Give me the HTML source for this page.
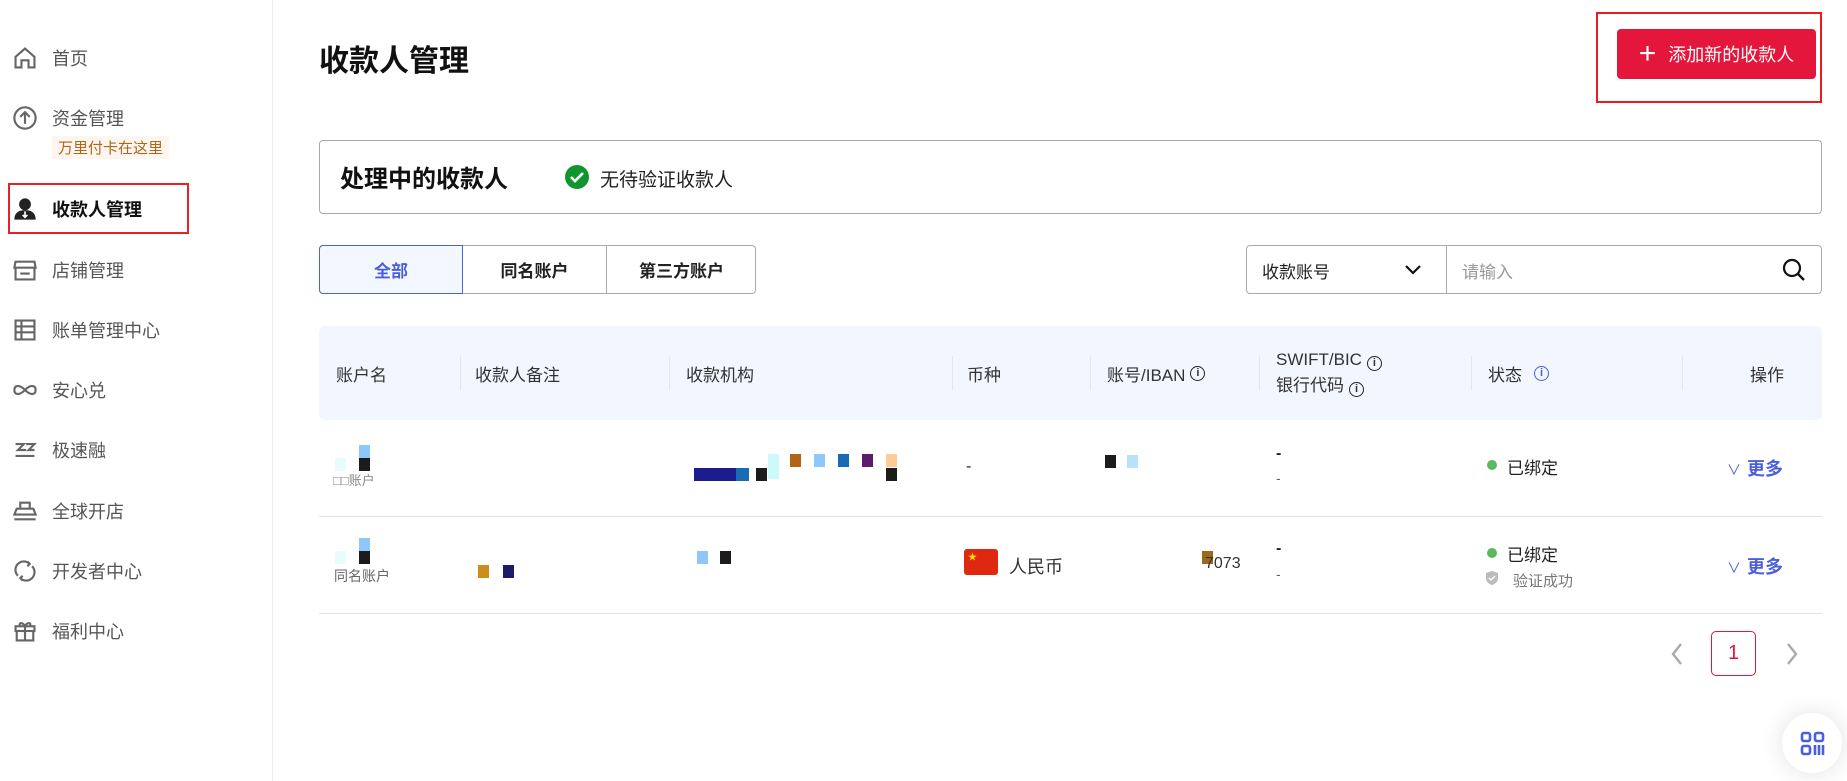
<!DOCTYPE html>
<html><head><meta charset="utf-8"><style>
*{margin:0;padding:0;box-sizing:border-box}
body{width:1847px;height:781px;overflow:hidden;background:#fff;font-family:"Liberation Sans","Noto Sans CJK SC",sans-serif;color:#222;position:relative}
.a{position:absolute}
.side{left:0;top:0;width:273px;height:781px;border-right:1px solid #eee}
.nav{position:absolute;left:52px;font-size:18px;color:#555;transform:translateY(-50%);white-space:nowrap}
.ic{position:absolute;left:12px;width:26px;height:26px;transform:translateY(-50%)}
.th{position:absolute;top:0;height:94px;display:flex;align-items:center;font-size:17px;color:#333}
.sep{position:absolute;top:30px;width:1px;height:34px;background:#e2e6ee}
.info{display:inline-block;width:15px;height:15px;border:1.6px solid #222;border-radius:50%;font-size:11px;line-height:12px;text-align:center;font-weight:bold;margin-left:5px;vertical-align:-1px}
.px{position:absolute;width:11px;height:13px}
.more{position:absolute;left:1727px;color:#4a5fd9;font-size:18px;font-weight:bold}
</style></head><body>
<div class="a side"></div>
<svg class="ic" style="top:58px" viewBox="0 0 22 22" fill="none" stroke="#666" stroke-width="1.8"><path d="M3 10 L11 3 L19 10 V19 H14 V13 H8 V19 H3 Z"/></svg>
<div class="nav" style="top:58px">首页</div>
<svg class="ic" style="top:118px" viewBox="0 0 22 22" fill="none" stroke="#666" stroke-width="1.8"><circle cx="11" cy="11" r="9"/><path d="M11 16V6M7 10l4-4 4 4"/></svg>
<div class="nav" style="top:118px">资金管理</div>
<div class="a" style="left:52px;top:136px;background:#fdf6ee;color:#b0651c;font-size:15px;padding:1px 6px">万里付卡在这里</div>
<div class="a" style="left:8px;top:183px;width:181px;height:51px;border:2px solid #e52226"></div>
<svg class="ic" style="top:209px" viewBox="0 0 22 22"><circle cx="11" cy="7" r="5" fill="#222"/><path d="M2 20c0-6 4-8 9-8s9 2 9 8z" fill="#222"/><path d="M11 13v5M9 16l2 2 2-2" stroke="#fff" stroke-width="1.4" fill="none"/></svg>
<div class="nav" style="top:209px;color:#111;font-weight:bold">收款人管理</div>
<svg class="ic" style="top:270px" viewBox="0 0 22 22" fill="none" stroke="#666" stroke-width="1.8"><path d="M3 4h16l1 5H2zM3 9v10h16V9M7 14h8"/></svg>
<div class="nav" style="top:270px">店铺管理</div>
<svg class="ic" style="top:330px" viewBox="0 0 22 22" fill="none" stroke="#666" stroke-width="1.8"><rect x="3" y="3" width="16" height="16"/><path d="M3 8h16M3 13h16M8 3v16"/></svg>
<div class="nav" style="top:330px">账单管理中心</div>
<svg class="ic" style="top:390px" viewBox="0 0 22 22" fill="none" stroke="#666" stroke-width="1.8"><path d="M2 11c0-4 4-5 9 0s9 4 9 0-4-5-9 0-9 4-9 0z"/></svg>
<div class="nav" style="top:390px">安心兑</div>
<svg class="ic" style="top:450px" viewBox="0 0 22 22" fill="none" stroke="#666" stroke-width="1.8"><path d="M3 6h7l-5 5h7M12 6h7l-5 5h5M3 16h16"/></svg>
<div class="nav" style="top:450px">极速融</div>
<svg class="ic" style="top:511px" viewBox="0 0 22 22" fill="none" stroke="#666" stroke-width="1.8"><path d="M7 4h8v5H7zM4 9h14l2 5H2zM2 18h18"/></svg>
<div class="nav" style="top:511px">全球开店</div>
<svg class="ic" style="top:571px" viewBox="0 0 22 22" fill="none" stroke="#666" stroke-width="1.8"><path d="M5 15a7 7 0 0 1 10-10M17 7a7 7 0 0 1-10 10M13 3l2 2-2 2M9 19l-2-2 2-2"/></svg>
<div class="nav" style="top:571px">开发者中心</div>
<svg class="ic" style="top:631px" viewBox="0 0 22 22" fill="none" stroke="#666" stroke-width="1.8"><rect x="3" y="7" width="16" height="4"/><path d="M4 11v8h14v-8M11 7v12M11 7c-2-4-6-3-4 0M11 7c2-4 6-3 4 0"/></svg>
<div class="nav" style="top:631px">福利中心</div>

<div class="a" style="left:319px;top:36px;font-size:30px;font-weight:bold;color:#111">收款人管理</div>
<div class="a" style="left:1596px;top:12px;width:226px;height:91px;border:2px solid #f01818"></div>
<div class="a" style="left:1617px;top:29px;width:199px;height:50px;background:#e5163c;border-radius:4px;color:#fff;font-size:18px;display:flex;align-items:center;justify-content:center"><span style="font-size:30px;font-weight:300;margin-right:12px;line-height:1">+</span>添加新的收款人</div>

<div class="a" style="left:319px;top:140px;width:1503px;height:74px;border:1px solid #aaa;border-radius:4px"></div>
<div class="a" style="left:340px;top:159px;font-size:24px;font-weight:bold;color:#111">处理中的收款人</div>
<svg class="a" style="left:564px;top:164px" width="26" height="26" viewBox="0 0 26 26"><circle cx="13" cy="13" r="12" fill="#11952f"/><path d="M7 13l4 4 8-8" stroke="#fff" stroke-width="2.6" fill="none"/></svg>
<div class="a" style="left:600px;top:165px;font-size:19px;color:#222">无待验证收款人</div>

<div class="a" style="left:319px;top:245px;width:437px;height:49px;border:1px solid #aaa;border-radius:4px"></div>
<div class="a" style="left:319px;top:245px;width:144px;height:49px;border:1px solid #4a63e0;background:#f3f7ff;border-radius:4px 0 0 4px;color:#4a5fd9;font-weight:bold;font-size:17px;display:flex;align-items:center;justify-content:center">全部</div>
<div class="a" style="left:463px;top:245px;width:144px;height:49px;border-right:1px solid #aaa;font-weight:bold;font-size:17px;display:flex;align-items:center;justify-content:center">同名账户</div>
<div class="a" style="left:607px;top:245px;width:149px;height:49px;font-weight:bold;font-size:17px;display:flex;align-items:center;justify-content:center">第三方账户</div>

<div class="a" style="left:1246px;top:245px;width:576px;height:49px;border:1px solid #aaa;border-radius:4px"></div>
<div class="a" style="left:1446px;top:245px;width:1px;height:49px;background:#aaa"></div>
<div class="a" style="left:1262px;top:258px;font-size:17px">收款账号</div>
<svg class="a" style="left:1404px;top:262px" width="18" height="14" viewBox="0 0 18 14"><path d="M2 4l7 7 7-7" stroke="#111" stroke-width="2.2" fill="none"/></svg>
<div class="a" style="left:1462px;top:258px;font-size:17px;color:#999">请输入</div>
<svg class="a" style="left:1781px;top:257px" width="26" height="26" viewBox="0 0 26 26"><circle cx="11" cy="11" r="8" stroke="#111" stroke-width="2.2" fill="none"/><path d="M17 17l6 6" stroke="#111" stroke-width="2.4"/></svg>

<div class="a" style="left:319px;top:326px;width:1503px;height:94px;background:#f2f6fe;border-radius:6px">
<div class="th" style="left:17px">账户名</div>
<div class="sep" style="left:141px"></div>
<div class="th" style="left:156px">收款人备注</div>
<div class="sep" style="left:350px"></div>
<div class="th" style="left:367px">收款机构</div>
<div class="sep" style="left:633px"></div>
<div class="th" style="left:648px">币种</div>
<div class="sep" style="left:771px"></div>
<div class="th" style="left:788px">账号/IBAN<span class="info">i</span></div>
<div class="sep" style="left:940px"></div>
<div class="th" style="left:957px;flex-direction:column;align-items:flex-start;justify-content:center;line-height:26px"><div>SWIFT/BIC<span class="info">i</span></div><div>银行代码<span class="info">i</span></div></div>
<div class="sep" style="left:1152px"></div>
<div class="th" style="left:1169px">状态<span class="info" style="border-color:#4a5fd9;color:#4a5fd9;margin-left:12px">i</span></div>
<div class="sep" style="left:1363px"></div>
<div class="th" style="left:1431px">操作</div>
</div>

<div class="a" style="left:319px;top:516px;width:1503px;height:1px;background:#e3e3e3"></div>
<div class="a" style="left:319px;top:613px;width:1503px;height:1px;background:#e3e3e3"></div>

<div class="px" style="left:359px;top:445px;background:#8ec8fa"></div>
<div class="px" style="left:359px;top:458px;background:#1c1c1c"></div>
<div class="px" style="left:335px;top:458px;background:#e8fcfc"></div>
<div class="a" style="left:333px;top:470px;font-size:13px;color:#888">□□账户</div>
<div class="px" style="left:694px;top:468px;width:48px;background:#1c1c8c"></div>
<div class="px" style="left:736px;top:468px;width:13px;background:#1a6bb5"></div>
<div class="px" style="left:756px;top:468px;background:#1c1c1c"></div>
<div class="px" style="left:768px;top:454px;height:25px;background:#ccfafa"></div>
<div class="px" style="left:790px;top:454px;background:#b06418"></div>
<div class="px" style="left:814px;top:454px;background:#8ec8fa"></div>
<div class="px" style="left:838px;top:454px;background:#1a6bb5"></div>
<div class="px" style="left:862px;top:454px;background:#5e1a6b"></div>
<div class="px" style="left:886px;top:454px;background:#ffcc99"></div>
<div class="px" style="left:886px;top:468px;background:#1c1c1c"></div>
<div class="a" style="left:966px;top:458px;font-size:16px">-</div>
<div class="px" style="left:1105px;top:455px;background:#1c1c1c"></div>
<div class="px" style="left:1127px;top:455px;background:#b8e2fc"></div>
<div class="a" style="left:1276px;top:445px;font-size:16px;font-weight:bold">-</div>
<div class="a" style="left:1276px;top:470px;font-size:14px;color:#666">-</div>
<div class="a" style="left:1487px;top:460px;width:10px;height:10px;border-radius:50%;background:#5cb85c"></div>
<div class="a" style="left:1507px;top:454px;font-size:17px">已绑定</div>
<div class="more" style="top:455px"><span style="font-weight:normal;font-size:14px;margin-right:6px">∨</span>更多</div>

<div class="px" style="left:359px;top:538px;background:#8ec8fa"></div>
<div class="px" style="left:359px;top:551px;background:#1c1c1c"></div>
<div class="px" style="left:335px;top:551px;background:#e8fcfc"></div>
<div class="a" style="left:334px;top:566px;font-size:14px;color:#666">同名账户</div>
<div class="px" style="left:478px;top:565px;background:#cc8e1a"></div>
<div class="px" style="left:503px;top:565px;background:#1c1c6b"></div>
<div class="px" style="left:697px;top:551px;background:#8ec8fa"></div>
<div class="px" style="left:720px;top:551px;background:#1c1c1c"></div>
<svg class="a" style="left:964px;top:549px" width="34" height="26" viewBox="0 0 34 26"><rect width="34" height="26" rx="3" fill="#de2910"/><text x="4" y="11" font-size="9" fill="#ffde00">★</text></svg>
<div class="a" style="left:1009px;top:553px;font-size:18px;color:#333">人民币</div>
<div class="px" style="left:1202px;top:551px;background:#9a6a1c"></div>
<div class="a" style="left:1205px;top:555px;font-size:16px;color:#333">7073</div>
<div class="a" style="left:1276px;top:540px;font-size:16px;font-weight:bold">-</div>
<div class="a" style="left:1276px;top:566px;font-size:14px;color:#666">-</div>
<div class="a" style="left:1487px;top:548px;width:10px;height:10px;border-radius:50%;background:#5cb85c"></div>
<div class="a" style="left:1507px;top:541px;font-size:17px">已绑定</div>
<svg class="a" style="left:1485px;top:570px" width="14" height="16" viewBox="0 0 14 16"><path d="M7 1l6 2v5c0 4-3 6-6 7-3-1-6-3-6-7V3z" fill="#bbb"/><path d="M4 8l2 2 4-4" stroke="#fff" stroke-width="1.5" fill="none"/></svg>
<div class="a" style="left:1513px;top:570px;font-size:15px;color:#777">验证成功</div>
<div class="more" style="top:553px"><span style="font-weight:normal;font-size:14px;margin-right:6px">∨</span>更多</div>

<svg class="a" style="left:1669px;top:641px" width="16" height="26" viewBox="0 0 16 26"><path d="M12 3L4 13l8 10" stroke="#aaa" stroke-width="2.4" fill="none"/></svg>
<div class="a" style="left:1711px;top:631px;width:45px;height:45px;border:1.5px solid #e5163c;border-radius:5px;color:#e5163c;font-size:20px;display:flex;align-items:center;justify-content:center">1</div>
<svg class="a" style="left:1784px;top:641px" width="16" height="26" viewBox="0 0 16 26"><path d="M4 3l8 10-8 10" stroke="#aaa" stroke-width="2.4" fill="none"/></svg>

<div class="a" style="left:1782px;top:713px;width:60px;height:60px;border-radius:50%;background:#fff;box-shadow:0 0 24px rgba(0,0,0,.12)"></div>
<svg class="a" style="left:1800px;top:731px" width="25" height="25" viewBox="0 0 25 25" fill="none" stroke="#4a5fd9" stroke-width="2.6"><rect x="2" y="2" width="8" height="8" rx="2"/><rect x="15" y="2" width="8" height="8" rx="2"/><rect x="2" y="15" width="8" height="8" rx="2"/><path d="M15 14v10M19 14v10M23 14v10"/></svg>
</body></html>
